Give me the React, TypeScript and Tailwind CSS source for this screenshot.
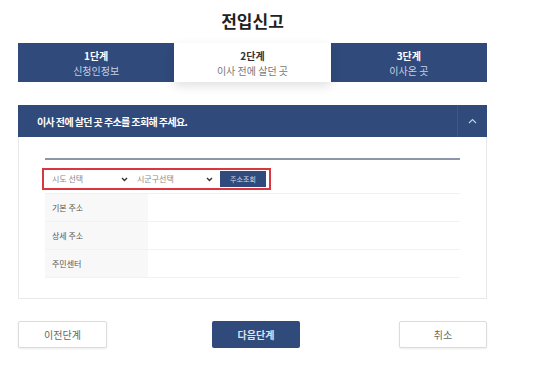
const font = { fontFamily: '"Noto Sans CJK KR", "Noto Sans", sans-serif' }

function Chevron() {
  return (
    <svg width="7" height="5" viewBox="0 0 7 5" aria-hidden="true">
      <path d="M1 1l2.5 2.5L6 1" fill="none" stroke="#333" strokeWidth="1.4" />
    </svg>
  )
}

const steps = [
  { no: "1단계", label: "신청인정보", active: false },
  { no: "2단계", label: "이사 전에 살던 곳", active: true },
  { no: "3단계", label: "이사온 곳", active: false },
]

const rows = ["기본 주소", "상세 주소", "주민센터"]

export default function App() {
  return (
    <div className="w-[546px] h-[373px] bg-white overflow-hidden" style={font}>
      <div className="ml-[18px] w-[469px]">
        <h1 className="pt-[9px] h-[43px] text-center text-[17px] leading-[24px] font-bold text-[#222]">
          전입신고
        </h1>

        <div className="flex h-[39px]">
          {steps.map((s) => (
            <div
              key={s.no}
              className={
                s.active
                  ? "flex-1 flex flex-col items-center justify-center bg-white shadow-[0_4px_10px_rgba(0,0,0,0.12)] z-10"
                  : "flex-1 flex flex-col items-center justify-center bg-[#2f4a7b]"
              }
            >
              <span
                className={
                  s.active
                    ? "text-[10px] leading-[15px] font-bold text-[#333]"
                    : "text-[10px] leading-[15px] font-bold text-white"
                }
              >
                {s.no}
              </span>
              <span
                className={
                  s.active
                    ? "text-[10px] leading-[15px] text-[#777]"
                    : "text-[10px] leading-[15px] text-[#c9d1e2]"
                }
              >
                {s.label}
              </span>
            </div>
          ))}
        </div>

        <div className="mt-[23px]">
          <div className="h-[32px] bg-[#2f4a7b] flex items-center">
            <span className="flex-1 pl-[19px] text-[10px] font-bold text-white tracking-[-0.6px]">
              이사 전에 살던 곳 주소를 조회해 주세요.
            </span>
            <div className="w-[30px] h-full border-l border-[#3f5687] flex items-center justify-center">
              <svg width="9" height="6" viewBox="0 0 9 6" aria-hidden="true">
                <path d="M1 5l3.5-3.5L8 5" fill="none" stroke="#c5cde0" strokeWidth="1.2" />
              </svg>
            </div>
          </div>

          <div className="h-[162px] border border-t-0 border-[#e8e8e8] px-[26px] pt-[21px]">
            <div className="h-[2px] bg-[#8d95ab]" />

            <div className="mt-[8px] w-[229px] h-[22px] -ml-[3px] border-2 border-[#d9373f] flex items-center pl-[2px] gap-[3px]">
              <div className="w-[86px] h-[16px] flex items-center justify-between pl-[6px] pr-[4px] text-[8px] text-[#888]">
                <span>시도 선택</span>
                <Chevron />
              </div>
              <div className="w-[82px] h-[16px] flex items-center justify-between pl-[2px] pr-[4px] text-[8px] text-[#888]">
                <span>시군구선택</span>
                <Chevron />
              </div>
              <div className="w-[46px] h-[16px] bg-[#2f4a7b] flex items-center justify-center text-[7px] text-[#d5dbe8]">
                주소조회
              </div>
            </div>

            <div className="mt-[3px] border-t border-[#f0f0f0]">
              {rows.map((r) => (
                <div key={r} className="flex h-[28px] border-b border-[#f2f2f2]">
                  <div className="w-[103px] bg-[#f8f8f8] flex items-center pl-[7px] text-[8px] text-[#555]">
                    {r}
                  </div>
                  <div className="flex-1" />
                </div>
              ))}
            </div>
          </div>
        </div>

        <div className="mt-[22px] flex items-center">
          <button className="w-[89px] h-[27px] bg-white border border-[#dcdcdc] rounded-[2px] shadow-[0_1px_2px_rgba(0,0,0,0.08)] text-[10px] text-[#666]">
            이전단계
          </button>
          <button className="ml-[105px] w-[88px] h-[27px] bg-[#2f4a7b] rounded-[2px] text-[10px] font-bold text-[#dfe4ee]">
            다음단계
          </button>
          <button className="ml-auto w-[88px] h-[27px] bg-white border border-[#dcdcdc] rounded-[2px] shadow-[0_1px_2px_rgba(0,0,0,0.08)] text-[10px] text-[#666]">
            취소
          </button>
        </div>
      </div>
    </div>
  )
}
